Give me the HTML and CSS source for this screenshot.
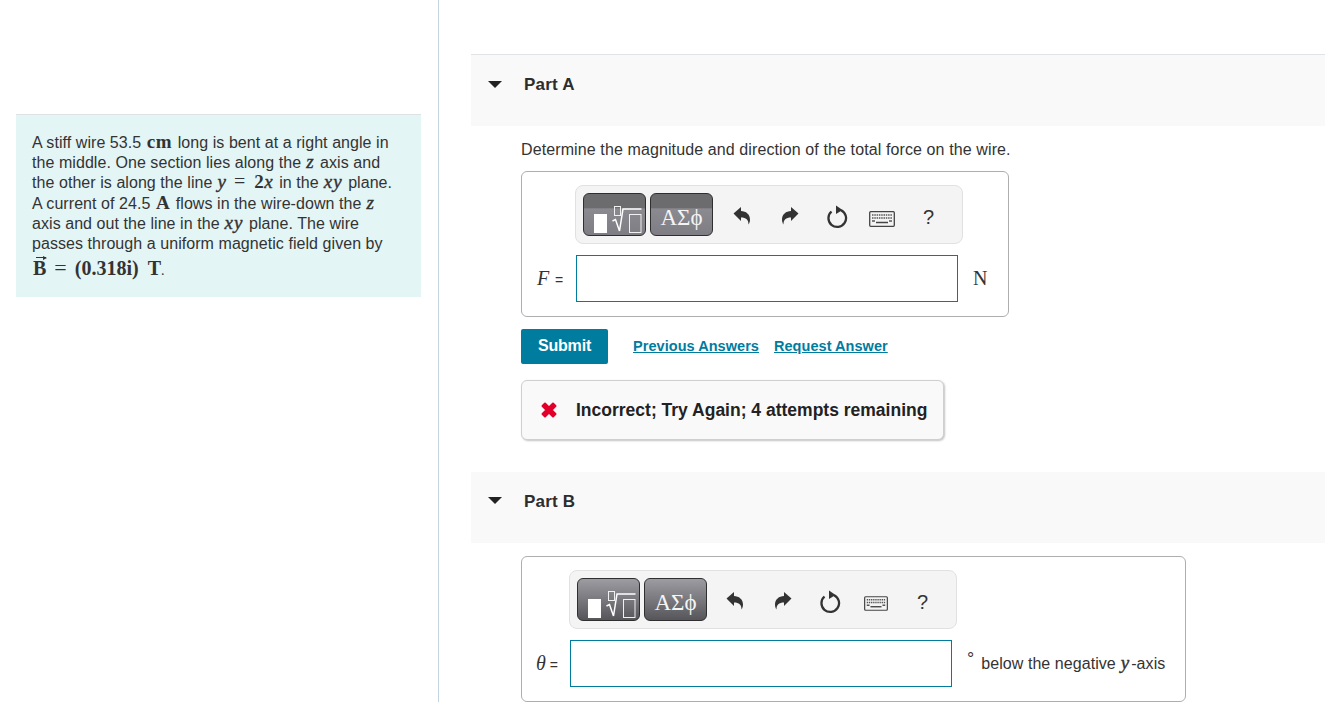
FILE: index.html
```html
<!DOCTYPE html>
<html lang="en">
<head>
<meta charset="utf-8">
<title>Part A</title>
<link rel="stylesheet" href="styles.css">
</head>
<body>
<svg class="defs" width="0" height="0" aria-hidden="true">
  <symbol id="i-templates" viewBox="0 0 62 43">
    <rect x="11" y="21" width="13" height="19" fill="#fff"/>
    <rect x="31.500" y="13.500" width="6" height="9" fill="none" stroke="#f0f0f0" stroke-width="1"/>
    <path d="M29.500 28l3-1.500 4 11.500 3.500-22h18.500" fill="none" stroke="#fff" stroke-width="1.500"/>
    <rect x="46.500" y="21.500" width="11.500" height="18" fill="none" stroke="#f0f0f0" stroke-width="1"/>
  </symbol>
  <symbol id="i-undo" viewBox="0 0 18 20">
    <path d="M0.500 7.500L8 1v4c5 0 9 3.500 9 8.500 0 2-.6 3.800-1.500 5 .2-4.500-2.500-7-7.500-7v3.500z" fill="#333"/>
  </symbol>
  <symbol id="i-redo" viewBox="0 0 18 20">
    <path d="M17.500 7.500L10 1v4c-5 0-9 3.500-9 8.500 0 2 .6 3.800 1.500 5-.2-4.500 2.500-7 7.500-7v3.500z" fill="#333"/>
  </symbol>
  <symbol id="i-reset" viewBox="0 0 22 24">
    <path d="M5.500 6.500a8.800 8.800 0 1 0 9.500-1.300" fill="none" stroke="#333" stroke-width="2.300"/>
    <path d="M10 0.500l6.500 4.500-6.500 4z" fill="#333"/>
  </symbol>
  <symbol id="i-keys" viewBox="0 0 26 16">
    <rect x="0.700" y="0.700" width="24.600" height="14.600" rx="1" fill="#f4f4f4" stroke="#444" stroke-width="1.300"/>
    <path d="M3 4h20M3 7h20" stroke="#555" stroke-width="1.600" stroke-dasharray="1.500 .8"/>
    <path d="M3 10h3M20 10h3" stroke="#555" stroke-width="1.600"/>
    <path d="M7 11.500h12" stroke="#444" stroke-width="1.500"/>
  </symbol>
</svg>
<div class="page">
  <aside class="left">
    <div class="intro">
      A stiff wire 53.5 <span class="mb">cm</span> long is bent at a right angle in<br>
      the middle. One section lies along the <i class="mi">z</i> axis and<br>
      the other is along the line <i class="mi">y</i> <span class="mr">=</span> <span class="mn">2</span><i class="mi">x</i> in the <i class="mi">xy</i> plane.<br>
      A current of 24.5 <span class="mb">A</span> flows in the wire-down the <i class="mi">z</i><br>
      axis and out the line in the <i class="mi">xy</i> plane. The wire<br>
      passes through a uniform magnetic field given by
      <div class="formula"><span class="vec">B</span> <span class="eq">=</span> (0.318i) <span class="tesla">T</span><span class="dot">.</span></div>
    </div>
  </aside>
  <main class="right">
    <section class="part part-a">
      <header class="part-head"><span class="caret"></span><h2>Part A</h2></header>
      <div class="part-body">
        <p class="prompt">Determine the magnitude and direction of the total force on the wire.</p>
        <div class="answer answer-a">
          <div class="toolbar toolbar-a">
            <span class="tbtn tbtn-hard"><svg class="t-icon"><use href="#i-templates"/></svg></span>
            <span class="tbtn tbtn-hard tbtn-greek">ΑΣϕ</span>
            <svg class="ic ic-undo"><use href="#i-undo"/></svg>
            <svg class="ic ic-redo"><use href="#i-redo"/></svg>
            <svg class="ic ic-reset"><use href="#i-reset"/></svg>
            <svg class="ic ic-keys"><use href="#i-keys"/></svg>
            <span class="help">?</span>
          </div>
          <label class="lab"><i class="ml">F</i> =</label>
          <div class="field"></div>
          <span class="unit unit-n">N</span>
        </div>
        <div class="actions">
          <button class="submit">Submit</button>
          <a class="link" href="#">Previous Answers</a>
          <a class="link" href="#">Request Answer</a>
        </div>
        <div class="feedback">
          <svg class="x" viewBox="0 0 18 18"><path d="M2.500 5L5 2.500l4 4 4-4L15.500 5l-4 4 4 4-2.500 2.500-4-4-4 4L2.500 13l4-4z" fill="#e2002b" stroke="#e2002b" stroke-width="2" stroke-linejoin="round"/></svg>
          <span>Incorrect; Try Again; 4 attempts remaining</span>
        </div>
      </div>
    </section>
    <section class="part part-b">
      <header class="part-head"><span class="caret"></span><h2>Part B</h2></header>
      <div class="part-body">
        <div class="answer answer-b">
          <div class="toolbar toolbar-b">
            <span class="tbtn tbtn-soft"><svg class="t-icon"><use href="#i-templates"/></svg></span>
            <span class="tbtn tbtn-soft tbtn-greek">ΑΣϕ</span>
            <svg class="ic ic-undo"><use href="#i-undo"/></svg>
            <svg class="ic ic-redo"><use href="#i-redo"/></svg>
            <svg class="ic ic-reset"><use href="#i-reset"/></svg>
            <svg class="ic ic-keys"><use href="#i-keys"/></svg>
            <span class="help">?</span>
          </div>
          <label class="lab"><i class="ml ml-theta">θ</i> =</label>
          <div class="field"></div>
          <span class="unit unit-b"><sup class="deg">°</sup><span class="after-deg">below the negative <i class="mi">y</i>-axis</span></span>
        </div>
      </div>
    </section>
  </main>
</div>
</body>
</html>
```

FILE: styles.css
```css
* { box-sizing: border-box; }
html, body { margin: 0; height: 100%; }
body {
  width: 1325px;
  height: 702px;
  overflow: hidden;
  background: #fff;
  color: #333;
  font-family: "Liberation Sans", Arial, sans-serif;
  font-size: 16px;
}
.defs { position: absolute; }
.page { display: flex; height: 702px; }

.left {
  width: 439px;
  flex: none;
  border-right: 1px solid #c3d5e3;
  padding: 114px 17px 0 16px;
}
.intro {
  background: #e4f5f6;
  border-top: 1px solid #dde3e3;
  height: 183px;
  padding: 18px 0 0 16px;
  line-height: 20.200px;
  letter-spacing: 0.060px;
  white-space: nowrap;
}
.mb {
  font-family: "Liberation Serif", serif;
  font-weight: bold;
  font-size: 19px;
  line-height: 0;
  letter-spacing: 0.600px;
  margin: 0 1px;
}
.mi {
  font-family: "Liberation Serif", serif;
  font-style: italic;
  font-size: 19px;
  line-height: 0;
  letter-spacing: 1px;
  margin: 0 1px 0 0.500px;
  -webkit-text-stroke: 0.400px #333;
}
.mr { font-family: "Liberation Serif", serif; font-size: 20px; line-height: 0; margin: 0 1.500px; }
.mn { font-family: "Liberation Serif", serif; font-weight: bold; font-size: 19px; line-height: 0; margin-left: 3px; }
.formula {
  font-family: "Liberation Serif", serif;
  font-size: 20px;
  font-weight: bold;
  line-height: 24px;
  margin-top: 2px;
  letter-spacing: 0;
}
.vec { position: relative; margin-left: 1px; }
.vec::before {
  content: "";
  position: absolute;
  left: 3px;
  top: 0;
  width: 10px;
  border-top: 1.500px solid #333;
}
.vec::after {
  content: "";
  position: absolute;
  left: 10px;
  top: -1.500px;
  border-left: 4px solid #333;
  border-top: 2.500px solid transparent;
  border-bottom: 2.500px solid transparent;
}
.eq { font-weight: normal; margin: 0 3px; font-size: 22px; line-height: 0; }
.tesla { margin-left: 4px; }
.dot { font-weight: normal; font-size: 14px; }

.right { flex: 1; padding: 54px 0 0 32px; min-width: 0; }
.part-head {
  display: flex;
  align-items: flex-start;
  background: #f9f9f9;
  height: 72px;
  padding: 20px 0 0 17px;
}
.part-a .part-head { border-top: 1px solid #e0e4e6; }
.part-b .part-head { height: 71px; padding-top: 19px; }
.caret {
  width: 0;
  height: 0;
  margin-top: 6px;
  border-left: 7px solid transparent;
  border-right: 7px solid transparent;
  border-top: 7px solid #222;
}
h2 {
  margin: 0 0 0 22px;
  font-size: 17px;
  line-height: 20px;
  font-weight: bold;
  color: #2d2d2d;
  letter-spacing: 0.200px;
}
.part-b h2 { margin-top: 1px; }
.part-body { padding-left: 50px; }
.prompt { margin: 0; padding-top: 14px; line-height: 19px; height: 45px; letter-spacing: 0.110px; }

.answer {
  display: grid;
  border: 1px solid #aeaeae;
  border-radius: 6px;
  height: 146px;
  padding: 13px 0 0 15px;
  row-gap: 11px;
  grid-template-rows: 59px 47px;
  align-items: center;
}
.answer-a { width: 488px; grid-template-columns: 39px 382px 1fr; }
.answer-b { width: 665px; margin-top: 13px; grid-template-columns: 33px 382px 1fr; }
.answer-b .lab { margin-left: -1px; }
.toolbar {
  grid-column: 2;
  grid-row: 1;
  width: 388px;
  height: 59px;
  margin-left: -1px;
  display: flex;
  align-items: flex-start;
  padding-top: 7px;
  padding-left: 7px;
  background: #f4f4f4;
  border: 1px solid #e1e1e1;
  border-radius: 8px;
}
.tbtn {
  display: block;
  width: 63px;
  height: 43px;
  border: 1px solid #2f2f2f;
  border-radius: 6px;
  color: #fff;
  flex: none;
  overflow: hidden;
}
.tbtn-hard { background: linear-gradient(#6c6c6e 0, #6c6c6e 34%, #8a8a90 36%, #7d7d83 100%); }
.tbtn-soft { background: linear-gradient(#9c9ca2 0, #55555a 100%); }
.tbtn + .tbtn { margin-left: 4px; }
.tbtn-greek {
  font-family: "Liberation Serif", serif;
  font-size: 23px;
  line-height: 48px;
  text-align: center;
  color: #f4f4f4;
}
.t-icon { display: block; width: 62px; height: 43px; margin-top: -1px; margin-left: -1px; }
.ic { flex: none; display: block; }
.ic-undo { width: 18px; height: 20px; margin: 13px 0 0 20px; }
.ic-redo { width: 18px; height: 20px; margin: 13px 0 0 30px; }
.ic-reset { width: 22px; height: 24px; margin: 12px 0 0 27px; }
.ic-keys { width: 26px; height: 16px; margin: 18px 0 0 21px; }
.help { flex: none; margin: 12px 0 0 28px; font-size: 20px; line-height: 24px; color: #333; }
.toolbar-b .ic-undo { margin-left: 19px; }
.toolbar-b .ic-redo { margin-left: 30px; }
.toolbar-b .ic-reset { margin-left: 27px; }
.toolbar-b .ic-keys { width: 24px; height: 15px; margin-left: 23px; }
.toolbar-b .help { margin-left: 29px; }

.lab { grid-row: 2; grid-column: 1; font-size: 14px; }
.ml { font-family: "Liberation Serif", serif; font-size: 20px; margin-right: 2px; }
.ml-theta { margin-right: 0; }
.field {
  grid-row: 2;
  grid-column: 2;
  height: 47px;
  width: 382px;
  background: #fff;
  border: 1px solid #007c9f;
}
.unit { grid-row: 2; grid-column: 3; padding-left: 15px; white-space: nowrap; }
.unit-n { font-family: "Liberation Serif", serif; font-size: 20px; }
.unit-b { letter-spacing: 0.060px; display: flex; align-items: baseline; }
.deg { font-size: 18px; line-height: 0; position: relative; top: -4px; }
.after-deg { margin-left: 7px; }

.actions { display: flex; align-items: center; margin-top: 12px; height: 35px; }
.submit {
  width: 87px;
  height: 35px;
  border: 0;
  border-radius: 2px;
  background: #007c9f;
  color: #fff;
  font: bold 16px "Liberation Sans", Arial, sans-serif;
  letter-spacing: -0.200px;
  padding: 0 0 2px;
}
.link {
  color: #007c9f;
  font-weight: bold;
  font-size: 14.500px;
  letter-spacing: 0.050px;
  text-decoration: underline;
  margin-left: 15px;
  margin-bottom: 2px;
}
.submit + .link { margin-left: 25px; }
.feedback {
  display: flex;
  align-items: center;
  margin-top: 16px;
  margin-bottom: 32px;
  width: 423px;
  height: 60px;
  padding-left: 18px;
  background: #f9f9f9;
  border: 1px solid #cfcfcf;
  border-radius: 6px;
  box-shadow: 1px 1px 2px #c4c4c4;
  font-weight: bold;
  font-size: 17.500px;
  color: #222;
  white-space: nowrap;
}
.x { width: 18px; height: 18px; flex: none; margin-right: 18px; }
```
